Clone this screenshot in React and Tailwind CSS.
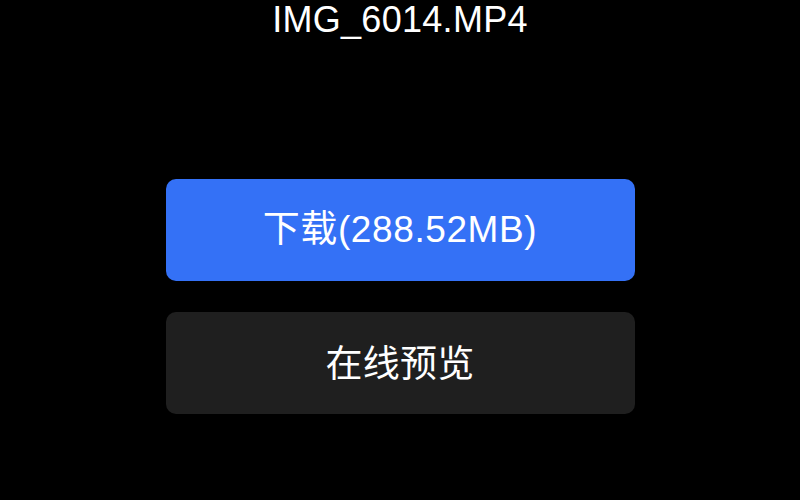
export default function App() {
  return (
    <div
      className="w-[800px] h-[500px] bg-black text-white flex flex-col items-center overflow-hidden"
      style={{ fontFamily: '"Liberation Sans", "Noto Sans CJK SC", sans-serif' }}
    >
      <div className="text-[36px] leading-[40px] tracking-[0.3px]">IMG_6014.MP4</div>

      <div className="w-[469px] flex flex-col gap-[31px] mt-[139px]">
        <button className="h-[102px] rounded-[10px] bg-[#3471f6] text-white text-[37px] tracking-[0.6px] flex items-center justify-center">
          下载(288.52MB)
        </button>
        <button className="h-[102px] rounded-[10px] bg-[#1f1f1f] text-white text-[37px] tracking-[0.3px] flex items-center justify-center pt-[4px]">
          在线预览
        </button>
      </div>
    </div>
  );
}
